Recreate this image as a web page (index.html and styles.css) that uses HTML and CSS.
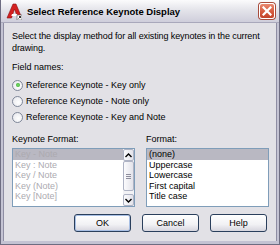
FILE: index.html
```html
<!DOCTYPE html>
<html lang="en">
<head>
  <meta charset="UTF-8">
  <title>Select Reference Keynote Display</title>
  <link rel="stylesheet" href="styles.css">
</head>
<body>

<div class="window">
  <div class="titlebar">
    <svg class="app-icon" width="16" height="17" viewBox="0 0 16 17">
      <path d="M1 15 L7 1 L10 1 L15 13 L11 13 L8.5 6 L5.5 15 Z" fill="#d42020" stroke="#8a1010" stroke-width="0.6"/>
      <path d="M6 11 L11 11 L11.8 13 L5.3 13 Z" fill="#ffffff"/>
      <rect x="11" y="12" width="5" height="5" fill="#ffffff" stroke="#555" stroke-width="0.6"/>
      <path d="M12.5 15.5 L14.5 13.5 M13 13.5 L14.5 13.5 L14.5 15" stroke="#000" stroke-width="0.8" fill="none"/>
    </svg>
    <span class="title">Select Reference Keynote Display</span>
    <div class="close">
      <svg width="10" height="10" viewBox="0 0 10 10">
        <path d="M1.5 1.5 L8.5 8.5 M8.5 1.5 L1.5 8.5" stroke="#fff" stroke-width="2.2" stroke-linecap="square"/>
      </svg>
    </div>
  </div>

  <div class="client">
    <p class="intro">Select the display method for all existing keynotes in the current drawing.</p>

    <div class="label">Field names:</div>
    <div class="radios">
      <label class="radio checked"><span class="circle"></span>Reference Keynote - Key only</label>
      <label class="radio"><span class="circle"></span>Reference Keynote - Note only</label>
      <label class="radio"><span class="circle"></span>Reference Keynote - Key and Note</label>
    </div>

    <div class="lists">
      <div class="col">
        <div class="label">Keynote Format:</div>
        <div class="listbox disabled">
          <ul class="items">
            <li class="selected">Key - Note</li>
            <li>Key : Note</li>
            <li>Key / Note</li>
            <li>Key (Note)</li>
            <li>Key [Note]</li>
          </ul>
          <div class="scrollbar">
            <div class="sb-btn">
              <svg width="7" height="5" viewBox="0 0 7 5"><path d="M0.5 4 L3.5 1 L6.5 4" stroke="#000" stroke-width="1.4" fill="none"/></svg>
            </div>
            <div class="sb-thumb"><span class="grip"></span></div>
            <div class="sb-btn">
              <svg width="7" height="5" viewBox="0 0 7 5"><path d="M0.5 1 L3.5 4 L6.5 1" stroke="#000" stroke-width="1.4" fill="none"/></svg>
            </div>
          </div>
        </div>
      </div>
      <div class="col">
        <div class="label">Format:</div>
        <div class="listbox">
          <ul class="items">
            <li class="selected">(none)</li>
            <li>Uppercase</li>
            <li>Lowercase</li>
            <li>First capital</li>
            <li>Title case</li>
          </ul>
        </div>
      </div>
    </div>

    <div class="buttons">
      <button class="default">OK</button>
      <button>Cancel</button>
      <button>Help</button>
    </div>
  </div>
</div>

</body>
</html>
```

FILE: styles.css
```css
body {
  margin: 0;
  font-family: 'Liberation Sans', Arial, sans-serif;
  font-size: 9px;
  color: #000;
  background-color: #e2e1e6;
}

.window {
  width: 280px;
  height: 245px;
  box-sizing: border-box;
  background-color: #c4c3d3;
  border: 1px solid #6e6d82;
  border-top: none;
  padding: 0 2px 3px 2px;
  display: flex;
  flex-direction: column;
}

.titlebar {
  height: 22px;
  margin: 0 -2px;
  padding: 0 4px 0 5px;
  display: flex;
  align-items: center;
  background: linear-gradient(#fbfbfc, #e4e4ea 45%, #cfcedb);
  border-bottom: 1px solid #a9a8bb;
}

.app-icon {
  flex: none;
  margin-right: 5px;
}

.title {
  flex: 1;
  font-weight: bold;
  font-size: 9.5px;
  color: #000;
}

.close {
  width: 16px;
  height: 16px;
  box-sizing: border-box;
  border: 1px solid #fff;
  border-radius: 3px;
  background: linear-gradient(#e98a72, #d55a3e 55%, #c2432a);
  box-shadow: 0 0 0 1px #a84c3c;
  display: flex;
  align-items: center;
  justify-content: center;
}

.client {
  flex: 1;
  background-color: #e2e1e6;
  border-left: 1px solid #8e8da3;
  border-right: 1px solid #8e8da3;
  padding: 7px 6px 0 8px;
}

.intro {
  margin: 0;
  line-height: 12px;
  letter-spacing: -0.1px;
}

.label {
  line-height: 12px;
}

.client > .label {
  margin-top: 7px;
}

.radios {
  margin-top: 4px;
}

.radio {
  display: flex;
  align-items: center;
  height: 16px;
}

.circle {
  width: 11px;
  height: 11px;
  box-sizing: border-box;
  border: 1px solid #7f8799;
  border-radius: 50%;
  background: radial-gradient(circle at 60% 60%, #ffffff, #e4e4ea);
  margin-right: 3px;
  position: relative;
}

.radio.checked .circle::after {
  content: '';
  position: absolute;
  left: 2.5px;
  top: 2.5px;
  width: 4px;
  height: 4px;
  border-radius: 50%;
  background: radial-gradient(circle, #7fe36a, #2b9a2b);
}

.lists {
  display: flex;
  gap: 11px;
  margin-top: 8px;
}

.col {
  width: 123px;
}

.listbox {
  margin-top: 3px;
  height: 59px;
  box-sizing: border-box;
  border: 1px solid #7f9db9;
  background-color: #fff;
  display: flex;
}

.items {
  list-style: none;
  margin: 0;
  padding: 0;
  flex: 1;
}

.items li {
  height: 10.5px;
  line-height: 10.5px;
  padding-left: 2px;
}

.items li.selected {
  background-color: #b9b8c2;
}

.disabled .items li {
  color: #acaab0;
}

.scrollbar {
  width: 11px;
  display: flex;
  flex-direction: column;
  background-color: #f2f2f5;
}

.sb-btn,
.sb-thumb {
  box-sizing: border-box;
  border: 1px solid #aeb3c4;
  border-radius: 2px;
  background: linear-gradient(90deg, #fbfbfd, #e3e3ea);
  display: flex;
  align-items: center;
  justify-content: center;
}

.sb-btn {
  height: 12px;
}

.sb-thumb {
  height: 30px;
  margin-bottom: auto;
}

.grip {
  width: 5px;
  height: 5px;
  border-top: 1px solid #8d8d9c;
  border-bottom: 1px solid #8d8d9c;
  box-sizing: border-box;
  background: linear-gradient(#8d8d9c, #8d8d9c) center / 5px 1px no-repeat;
}

.buttons {
  display: flex;
  justify-content: flex-end;
  gap: 11px;
  margin-top: 7px;
  padding-right: 3px;
}

button {
  width: 57px;
  height: 18px;
  padding: 0;
  font-family: 'Liberation Sans', Arial, sans-serif;
  font-size: 9px;
  color: #000;
  border: 1px solid #2a3f5c;
  border-radius: 3px;
  background: linear-gradient(#ffffff, #f1f1f4 60%, #d6d5de);
}

button.default {
  box-shadow: inset 0 0 0 1px #a8bfe4;
}
```
